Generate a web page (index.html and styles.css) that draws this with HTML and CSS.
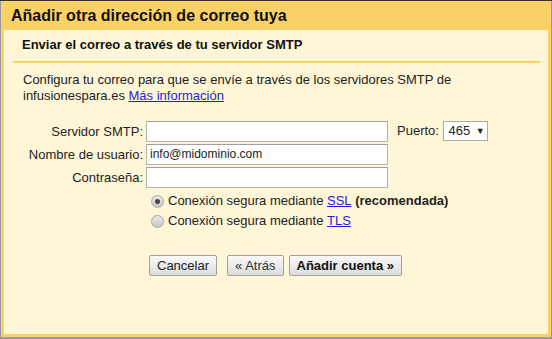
FILE: index.html
```html
<!DOCTYPE html>
<html lang="es">
<head>
    <meta charset="UTF-8">
    <meta name="viewport" content="width=device-width, initial-scale=1.0">
    <title>Añadir otra dirección</title>
    <link rel="stylesheet" href="styles.css">
</head>
<body>
    <div class="dialog">
        <div class="title">Añadir otra dirección de correo tuya</div>
        <div class="content">
            <div class="subtitle">Enviar el correo a través de tu servidor SMTP</div>
            <div class="rule"></div>
            <p class="intro">Configura tu correo para que se envíe a través de los servidores SMTP de<br>infusionespara.es <a href="#">Más información</a></p>

            <div class="form">
                <label class="lbl">Servidor SMTP:</label>
                <span class="field"></span>
                <span class="port">Puerto: <span class="select">465 <span class="arrow">▼</span></span></span>

                <label class="lbl">Nombre de usuario:</label>
                <span class="field">info@midominio.com</span>
                <span></span>

                <label class="lbl">Contraseña:</label>
                <span class="field"></span>
                <span></span>
            </div>

            <div class="radios">
                <div class="radio-row"><span class="radio checked"></span>Conexión segura mediante&nbsp;<a href="#">SSL</a>&nbsp;<b>(recomendada)</b></div>
                <div class="radio-row"><span class="radio"></span>Conexión segura mediante&nbsp;<a href="#">TLS</a></div>
            </div>

            <div class="buttons">
                <button class="btn">Cancelar</button>
                <button class="btn back">« Atrás</button>
                <button class="btn primary">Añadir cuenta »</button>
            </div>
        </div>
    </div>
</body>
</html>
```

FILE: styles.css
```css
body {
    font-family: "Liberation Sans", Arial, sans-serif;
    font-size: 13px;
    color: #222;
    background-color: #9a9a9a;
    margin: 0;
    padding: 0 1px 2px 1px;
    border-top: 1px solid #333;
}
.dialog {
    background-color: #f9d166;
    padding: 0 3px 3px 3px;
}
.title {
    height: 29px;
    line-height: 30px;
    padding-left: 7px;
    font-size: 16px;
    font-weight: bold;
    color: #111;
}
.content {
    background-color: #fff6d8;
    height: 304px;
    padding-top: 7px;
    box-sizing: border-box;
}
.subtitle {
    font-weight: bold;
    line-height: 16px;
    padding-left: 18px;
    color: #111;
}
.rule {
    height: 2px;
    background-color: #f9d166;
    margin: 8px 8px 0 9px;
}
.intro {
    margin: 9px 0 0 19px;
    line-height: 16px;
}
a {
    color: #1e1ed6;
}
.form {
    display: grid;
    grid-template-columns: 123px 242px auto;
    column-gap: 3px;
    row-gap: 2px;
    margin: 17px 0 0 16px;
}
.lbl {
    text-align: right;
    line-height: 21px;
}
.field {
    height: 21px;
    box-sizing: border-box;
    border: 1px solid #b4b4b4;
    border-top-color: #a0a0a0;
    background-color: #fff;
    font-size: 12px;
    line-height: 19px;
    padding-left: 3px;
}
.port {
    padding-left: 6px;
    line-height: 20px;
}
.select {
    display: inline-block;
    width: 45px;
    height: 20px;
    box-sizing: border-box;
    border: 1px solid #aaa;
    background-color: #fff;
    padding-left: 5px;
    line-height: 18px;
}
.arrow {
    font-size: 9px;
    vertical-align: 1px;
    margin-left: 2px;
}
.radios {
    margin: 3px 0 0 147px;
}
.radio-row {
    display: flex;
    align-items: center;
    line-height: 20px;
}
.radio {
    width: 11px;
    height: 11px;
    border-radius: 50%;
    border: 1px solid #aaa;
    background: linear-gradient(#e8e8e8, #c8c8c8);
    margin-right: 4px;
    position: relative;
}
.radio.checked::after {
    content: "";
    position: absolute;
    left: 3px;
    top: 3px;
    width: 5px;
    height: 5px;
    border-radius: 50%;
    background-color: #444;
}
.buttons {
    display: flex;
    margin: 24px 0 0 145px;
}
.btn {
    font-family: "Liberation Sans", Arial, sans-serif;
    font-size: 13px;
    color: #222;
    height: 21px;
    padding: 0 7px;
    border: 1px solid #a0a0a0;
    border-radius: 2px;
    background: linear-gradient(#f9f9f9, #dcdcdc);
}
.back {
    margin-left: 10px;
    color: #333;
}
.primary {
    margin-left: 5px;
    font-weight: bold;
    color: #111;
}
```
